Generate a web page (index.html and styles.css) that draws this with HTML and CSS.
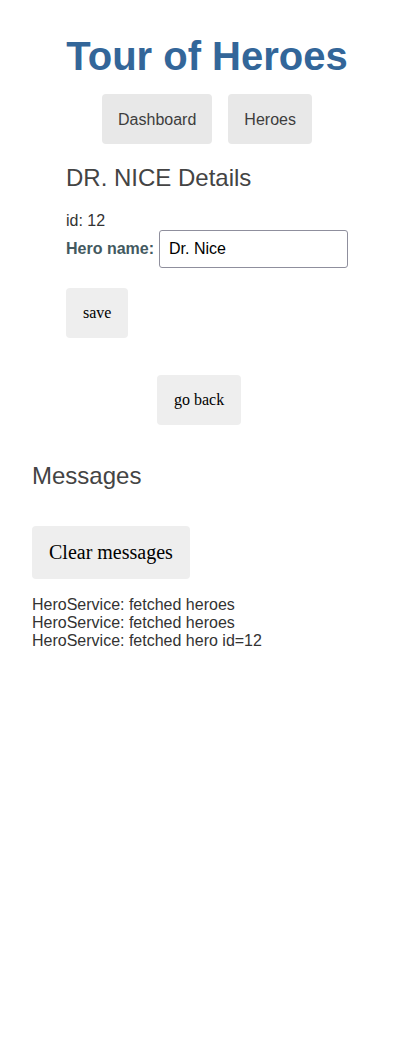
FILE: index.html
```html
<!DOCTYPE html>
<html lang="en">
<head>
<meta charset="utf-8">
<title>Tour of Heroes</title>
<link rel="stylesheet" href="styles.css">
</head>
<body>
  <h1 class="title">Tour of Heroes</h1>
  <nav class="nav">
    <a class="nav-link" href="#">Dashboard</a>
    <a class="nav-link" href="#">Heroes</a>
  </nav>
  <section class="detail">
    <h2 class="heading">DR. NICE Details</h2>
    <div class="id-line">id: 12</div>
    <div class="name-row">
      <label class="name-label" for="hero-name">Hero name:</label>
      <input class="name-input" id="hero-name" type="text" value="Dr. Nice">
    </div>
    <button class="btn btn-save" type="button">save</button>
    <button class="btn btn-back" type="button">go back</button>
  </section>
  <section class="messages">
    <h2 class="heading">Messages</h2>
    <button class="btn btn-clear" type="button">Clear messages</button>
    <div class="msg-list">
      <div class="msg">HeroService: fetched heroes</div>
      <div class="msg">HeroService: fetched heroes</div>
      <div class="msg">HeroService: fetched hero id=12</div>
    </div>
  </section>
</body>
</html>
```
FILE: styles.css
```css
html, body {
  margin: 0;
  padding: 0;
  background: #fff;
}

body {
  padding: 0 32px;
  font-family: "Liberation Sans", Arial, sans-serif;
  color: #333;
}

.title {
  margin: 33px 0 0;
  font-size: 40px;
  line-height: 46px;
  font-weight: bold;
  color: #369;
  text-align: center;
}

.nav {
  margin-top: 15px;
  display: flex;
  justify-content: center;
  gap: 16px;
}

.nav-link {
  display: block;
  padding: 17px 16px 15px;
  font-size: 16px;
  line-height: 18px;
  color: #3d3d3d;
  background: #e8e8e8;
  border-radius: 4px;
  text-decoration: none;
}

.detail {
  margin: 0 0 0 34px;
  display: flex;
  flex-direction: column;
  align-items: flex-start;
}

.heading {
  margin: 0;
  font-size: 24px;
  line-height: 28px;
  font-weight: normal;
  color: #444;
}

.detail .heading {
  margin-top: 20px;
}

.id-line {
  margin-top: 20px;
  font-size: 16px;
  line-height: 18px;
  color: #333;
}

.name-row {
  display: flex;
  align-items: center;
  gap: 5px;
}

.name-label {
  font-size: 16px;
  line-height: 18px;
  font-weight: bold;
  color: #435960;
}

.name-input {
  box-sizing: border-box;
  width: 189px;
  height: 38px;
  margin: 0;
  padding: 0 9px;
  font-family: "Liberation Sans", Arial, sans-serif;
  font-size: 16px;
  color: #000;
  border: 1px solid #8f8f9d;
  border-radius: 3px;
  background: #fff;
}

.btn {
  box-sizing: border-box;
  margin: 0;
  border: none;
  border-radius: 4px;
  background: #eee;
  color: #000;
  font-family: "Liberation Serif", "Times New Roman", serif;
  font-size: 16px;
  line-height: 18px;
  height: 50px;
  padding: 16px 17px;
}

.btn-save {
  margin-top: 20px;
}

.btn-back {
  margin-top: 37px;
  margin-left: 91px;
}

.messages {
  margin-top: 37px;
  display: flex;
  flex-direction: column;
  align-items: flex-start;
}

.btn-clear {
  margin-top: 36px;
  font-size: 20px;
  line-height: 21px;
  height: 53px;
  padding: 16px 17px;
}

.msg-list {
  margin-top: 17px;
}

.msg {
  font-size: 16px;
  line-height: 18px;
  color: #333;
}
```
